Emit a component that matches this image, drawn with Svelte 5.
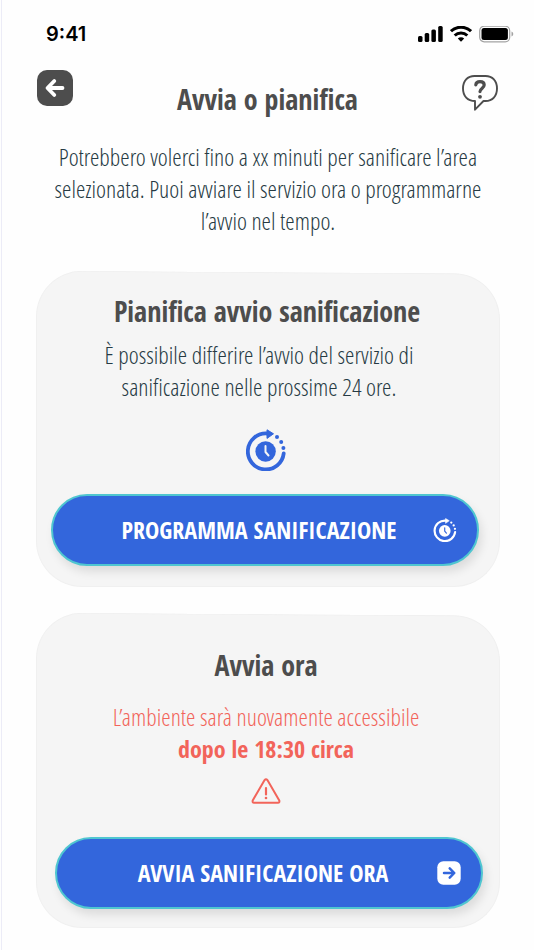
<script lang="ts">
  const time = "9:41";

  let scheduled = false;
  let started = false;
</script>

{#snippet timer()}
  <svg class="timer" viewBox="0 0 40 42" aria-hidden="true">
    <path d="M21 4.5A18 18 0 1 0 37.7 24.5" fill="none" stroke="currentColor" stroke-width="3.8" stroke-linecap="round" />
    <path d="M21 0.8 27.5 4.8 21 9.4Z" fill="currentColor" stroke="currentColor" stroke-linejoin="round" />
    <circle cx="31" cy="8" r="2" fill="currentColor" />
    <circle cx="35.2" cy="13" r="2" fill="currentColor" />
    <circle cx="37.4" cy="19" r="2" fill="currentColor" />
    <circle cx="19.6" cy="22.5" r="10.2" fill="currentColor" />
    <path class="hands" d="M19.5 17v6l3 3.5" fill="none" stroke-width="2" stroke-linecap="round" stroke-linejoin="round" />
  </svg>
{/snippet}

<div class="page">
  <div class="status">
    <span class="time">{time}</span>
    <div class="indicators">
      <svg width="25" height="17" viewBox="0 0 25 17" aria-hidden="true">
        <rect x="0" y="10" width="4.5" height="6" rx="1.5" />
        <rect x="6.7" y="7" width="4.5" height="9" rx="1.5" />
        <rect x="13.4" y="3.5" width="4.5" height="12.5" rx="1.5" />
        <rect x="20.2" y="0" width="4.5" height="16" rx="1.5" />
      </svg>
      <svg width="22" height="17" viewBox="0 0 22 17" fill="none" stroke="#000" stroke-width="3" aria-hidden="true">
        <path d="M1 5.2a14.5 14.5 0 0 1 20 0" />
        <path d="M4.7 9.5a9 9 0 0 1 12.6 0" />
        <path d="M11 15.8 7.8 12.6a4.6 4.6 0 0 1 6.4 0Z" fill="#000" stroke="none" />
      </svg>
      <svg width="35" height="17" viewBox="0 0 35 17" aria-hidden="true">
        <rect x="0.7" y="0.2" width="30" height="15.6" rx="4.5" fill="none" stroke="#a3a3a3" stroke-width="1.2" />
        <rect x="2.5" y="2" width="26.4" height="12" rx="2.5" />
        <path d="M32.5 5.500q1.800.8 1.800 2.500t-1.800 2.500Z" fill="#a3a3a3" />
      </svg>
    </div>
  </div>

  <header>
    <button type="button" class="icon-button" aria-label="Indietro">
      <svg width="36" height="36" viewBox="0 0 36 36" aria-hidden="true">
        <rect width="36" height="36" rx="10" fill="#4d4d4d" />
        <path d="M25.500 18H11M17.3 11 10.5 18l6.8 7" fill="none" stroke="#fff" stroke-width="3.8" stroke-linecap="round" stroke-linejoin="round" />
      </svg>
    </button>
    <h1>Avvia o pianifica</h1>
    <button type="button" class="icon-button help" aria-label="Aiuto">
      <svg width="36" height="36" viewBox="0 0 36 36" fill="none" stroke="#4d4d4d" stroke-linecap="round" stroke-linejoin="round" aria-hidden="true">
        <path d="M12.5 1h11C30.5 1 35 6 35 13.500S30.5 26 23.500 26H21.500L13 34.700V26C5.500 26 1 21 1 13.500S5.500 1 12.500 1Z" stroke-width="1.9" />
        <path d="M13.8 9.800C14 7.700 15.6 6.600 18 6.600c2.500 0 4.200 1.300 4.200 3.500 0 2.900-4.200 3.300-4.200 6.500" stroke-width="3.2" />
        <circle cx="18" cy="21.8" r="1.9" fill="#4d4d4d" stroke="none" />
      </svg>
    </button>
  </header>

  <p class="intro">
    Potrebbero volerci fino a xx minuti per sanificare l’area<br />
    selezionata. Puoi avviare il servizio ora o programmarne<br />
    l’avvio nel tempo.
  </p>

  <section class="card schedule">
    <h2>Pianifica avvio sanificazione</h2>
    <p>È possibile differire l’avvio del servizio di<br />sanificazione nelle prossime 24 ore.</p>
    <div class="symbol">{@render timer()}</div>
    <button type="button" class="action" on:click={() => (scheduled = true)}>
      <span>PROGRAMMA SANIFICAZIONE</span>
      {@render timer()}
    </button>
  </section>

  <section class="card start">
    <h2>Avvia ora</h2>
    <p>L’ambiente sarà nuovamente accessibile<br /><b>dopo le 18:30 circa</b></p>
    <div class="symbol">
      <svg width="30" height="26" viewBox="0 0 30 26" fill="none" stroke="#f2645a" stroke-linecap="round" stroke-linejoin="round" aria-hidden="true">
        <path d="M13.6 2.100Q15 .3 16.400 2.100L28.300 22.500Q28.800 24.700 27 24.700H3Q1.200 24.700 1.700 22.500Z" stroke-width="2" />
        <path d="M15 10v6.500" stroke-width="2.2" />
        <circle cx="15" cy="20" r="1.3" fill="#f2645a" stroke="none" />
      </svg>
    </div>
    <button type="button" class="action" on:click={() => (started = true)}>
      <span>AVVIA SANIFICAZIONE ORA</span>
      <svg width="24" height="24" viewBox="0 0 24 24" aria-hidden="true">
        <rect x="0.3" y="0.3" width="23.4" height="23.4" rx="6" fill="#fff" />
        <path d="M7 12h10M12.7 7.300 17.300 12l-4.600 4.700" fill="none" stroke="#3366dc" stroke-width="2.5" stroke-linecap="round" stroke-linejoin="round" />
      </svg>
    </button>
  </section>
</div>

<style>
  :global(body) {
    background: #fefefe;
  }

  .page {
    box-sizing: border-box;
    min-height: 100vh;
    margin-left: 1px;
    padding: 22px 34px 22px;
    border-left: 1px solid #ececf7;
    font-family: "Open Sans Condensed", "Liberation Sans Narrow", "Open Sans", sans-serif;
    text-align: center;
    color: #263a43;
  }

  .status {
    display: flex;
    align-items: center;
    justify-content: space-between;
    height: 24px;
    padding: 0 0 0 10px;
  }

  .time {
    font-family: Inter, sans-serif;
    font-size: 20px;
    font-weight: 600;
    color: #000;
  }

  .indicators {
    display: flex;
    gap: 7px;
    margin-right: -14px;
  }

  header {
    display: flex;
    align-items: flex-start;
    justify-content: space-between;
    padding: 24px 2px 0 1px;
  }

  .icon-button {
    padding: 0;
    border: none;
    background: none;
    cursor: pointer;
  }

  .icon-button svg {
    display: block;
  }

  .help {
    margin-top: 5px;
  }

  h1,
  h2 {
    margin: 0;
    font-size: 28px;
    font-weight: 800;
    line-height: 40px;
    color: #4d4d4d;
  }

  h1 {
    margin-top: 9px;
  }

  p {
    margin: 0;
    font-family: "Open Sans Condensed Light", "Open Sans Condensed", "Liberation Sans Narrow", "Open Sans", sans-serif;
    font-size: 24px;
    font-weight: 300;
    line-height: 32px;
    white-space: nowrap;
  }

  b {
    font-family: "Open Sans Condensed", "Liberation Sans Narrow", "Open Sans", sans-serif;
    font-weight: 700;
  }

  .intro {
    display: flow-root;
    margin: 22px -34px 35px;
  }

  .card {
    position: relative;
    z-index: 0;
    margin-bottom: 27px;
  }

  /* the upper edge of each card drops slightly towards the right */
  .card::before,
  .card::after {
    content: "";
    position: absolute;
    z-index: -1;
    left: 0;
    right: 0;
    box-sizing: border-box;
    border: 1px solid #f0f0f0;
    background: #f5f5f5;
  }

  .card::before {
    top: 0;
    bottom: 45%;
    border-bottom: none;
    border-radius: 46px 46px 0 0;
    transform: skewY(0.35deg);
  }

  .card::after {
    top: 50%;
    bottom: 0;
    border-top: none;
    border-radius: 0 0 46px 46px;
  }

  .schedule {
    padding: 19px 21px 21px 15px;
  }

  .schedule h2 {
    margin-right: -4px;
  }

  .schedule p {
    margin: 8px 12px 0 0;
  }

  .schedule .symbol {
    margin: 26px 0 23px;
    padding-left: 2px;
    color: #3366dc;
  }

  .start {
    margin-bottom: 0;
    padding: 31px 17px 19px 19px;
  }

  .start h2,
  .start p,
  .start .symbol {
    padding-right: 6px;
  }

  .start p {
    margin-top: 16px;
    color: #f2645a;
  }

  .start .symbol {
    margin: 13px 0 33px;
  }

  .symbol svg {
    display: block;
    margin: 0 auto;
  }

  .timer {
    width: 40px;
    height: 42px;
  }

  .hands {
    stroke: #f5f5f5;
  }

  .action {
    display: flex;
    align-items: center;
    box-sizing: border-box;
    width: 100%;
    height: 72px;
    padding: 0 20px 0 32px;
    border: 2px solid #4fc6d0;
    border-radius: 36px;
    background: #3366dc;
    box-shadow: 3px 6px 10px rgba(0, 0, 0, 0.1);
    color: #fff;
    font-family: inherit;
    font-size: 24px;
    font-weight: 700;
    cursor: pointer;
  }

  .action span {
    flex: 1;
    padding-bottom: 2px;
  }

  .action .timer {
    width: 24px;
    height: 24px;
  }

  .action .hands {
    stroke: #3366dc;
  }
</style>
